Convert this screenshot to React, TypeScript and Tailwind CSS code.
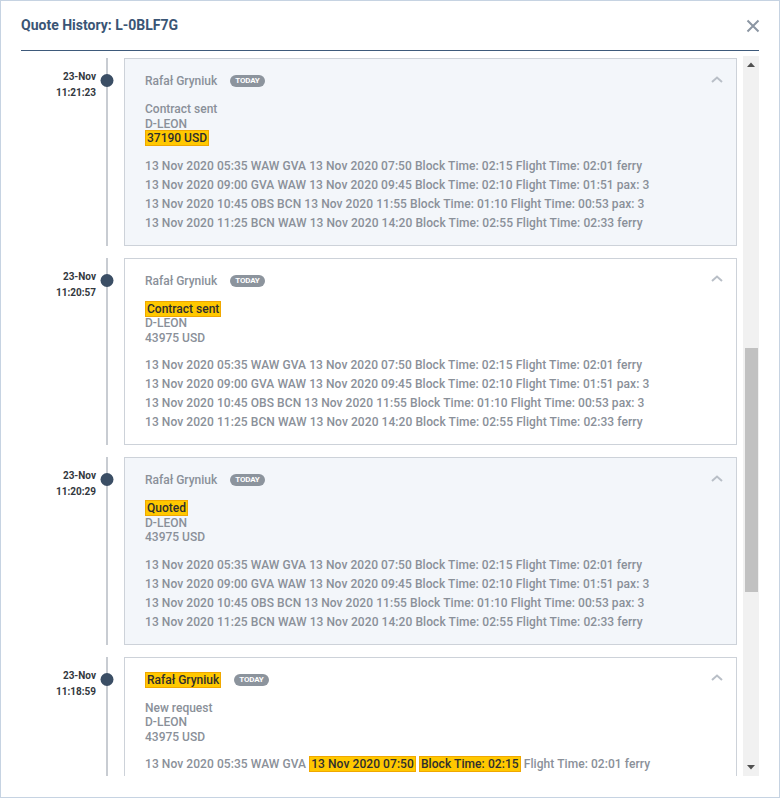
import React from "react";

type Seg = { t: string; hl?: boolean };

type Entry = {
  date: string;
  time: string;
  tinted: boolean;
  nameHl?: boolean;
  status: string;
  statusHl?: boolean;
  price: string;
  priceHl?: boolean;
  legs: Seg[][];
};

const baseLegs: Seg[][] = [
  [{ t: "13 Nov 2020 05:35 WAW GVA 13 Nov 2020 07:50 Block Time: 02:15 Flight Time: 02:01 ferry" }],
  [{ t: "13 Nov 2020 09:00 GVA WAW 13 Nov 2020 09:45 Block Time: 02:10 Flight Time: 01:51 pax: 3" }],
  [{ t: "13 Nov 2020 10:45 OBS BCN 13 Nov 2020 11:55 Block Time: 01:10 Flight Time: 00:53 pax: 3" }],
  [{ t: "13 Nov 2020 11:25 BCN WAW 13 Nov 2020 14:20 Block Time: 02:55 Flight Time: 02:33 ferry" }],
];

const entries: Entry[] = [
  { date: "23-Nov", time: "11:21:23", tinted: true, status: "Contract sent", price: "37190 USD", priceHl: true, legs: baseLegs },
  { date: "23-Nov", time: "11:20:57", tinted: false, status: "Contract sent", statusHl: true, price: "43975 USD", legs: baseLegs },
  { date: "23-Nov", time: "11:20:29", tinted: true, status: "Quoted", statusHl: true, price: "43975 USD", legs: baseLegs },
  {
    date: "23-Nov",
    time: "11:18:59",
    tinted: false,
    nameHl: true,
    status: "New request",
    price: "43975 USD",
    legs: [
      [
        { t: "13 Nov 2020 05:35 WAW GVA " },
        { t: "13 Nov 2020 07:50", hl: true },
        { t: " " },
        { t: "Block Time: 02:15", hl: true },
        { t: " Flight Time: 02:01 ferry" },
      ],
      ...baseLegs.slice(1),
    ],
  },
];

function Mark({ children }: { children: React.ReactNode }) {
  return (
    <span className="bg-[#ffc800] border border-[#f0a800] text-[#2e2e2e] px-px">{children}</span>
  );
}

function Line({ text, hl }: { text: string; hl?: boolean }) {
  return <div>{hl ? <Mark>{text}</Mark> : text}</div>;
}

function Chevron() {
  return (
    <svg width="12" height="7" viewBox="0 0 12 7" className="mt-[-4px]">
      <path d="M1 6 L6 1.5 L11 6" fill="none" stroke="#b9bfc7" strokeWidth="2" />
    </svg>
  );
}

function Card({ e }: { e: Entry }) {
  return (
    <div
      className={
        "flex-1 mr-[6px] border border-[#cdd2d9] pl-5 pr-[13px] pt-[15px] pb-[12px] " +
        (e.tinted ? "bg-[#f3f6fa]" : "bg-white")
      }
    >
      <div className="flex items-center h-[14px]">
        <span className="text-[12px] leading-[14px]">
          {e.nameHl ? <Mark>Rafał Gryniuk</Mark> : "Rafał Gryniuk"}
        </span>
        <span className="ml-[13px] h-[12px] px-[5px] rounded-full bg-[#8c949d] text-white text-[8px] leading-[12px] font-bold tracking-[-0.2px]">
          TODAY
        </span>
        <div className="flex-1" />
        <Chevron />
      </div>
      <div className="mt-[14px] text-[12px] leading-[14.5px]">
        <Line text={e.status} hl={e.statusHl} />
        <Line text="D-LEON" />
        <Line text={e.price} hl={e.priceHl} />
      </div>
      <div className="mt-[11px] text-[12px] leading-[19px] whitespace-nowrap tracking-[0.07px]">
        {e.legs.map((segs, i) => (
          <div key={i}>
            {segs.map((s, j) => (s.hl ? <Mark key={j}>{s.t}</Mark> : <span key={j}>{s.t}</span>))}
          </div>
        ))}
      </div>
    </div>
  );
}

function Row({ e, last }: { e: Entry; last: boolean }) {
  return (
    <div className={"flex " + (last ? "" : "pb-3")}>
      <div className="w-[75px] text-right pt-[11px] text-[10px] leading-[16px] font-bold text-[#333840]">
        <div>{e.date}</div>
        <div>{e.time}</div>
      </div>
      <div className="relative w-[22px] flex justify-center">
        <div className="w-[2px] bg-[#c8ccd2]" />
        <div className="absolute top-[16px] left-1/2 -translate-x-1/2 w-[13px] h-[13px] rounded-full bg-[#3b4e65]" />
      </div>
      <div className="w-[6px]" />
      <Card e={e} />
    </div>
  );
}

function ScrollBar() {
  return (
    <div className="w-[16px] flex flex-col bg-[#f1f1f1]">
      <div className="h-[17px] flex items-center justify-center">
        <svg width="8" height="5" viewBox="0 0 8 5">
          <path d="M0 5 L4 0.5 L8 5 Z" fill="#505050" />
        </svg>
      </div>
      <div className="h-[275px]" />
      <div className="h-[244px] ml-[2px] mr-[1px] bg-[#c1c1c1]" />
      <div className="flex-1" />
      <div className="h-[17px] flex items-center justify-center">
        <svg width="8" height="5" viewBox="0 0 8 5">
          <path d="M0 0 L4 4.5 L8 0 Z" fill="#505050" />
        </svg>
      </div>
    </div>
  );
}

export default function App() {
  return (
    <div className="w-[780px] h-[799px] bg-white font-['Roboto',sans-serif] font-medium text-[#8a9099]">
      <div className="h-[798px] border border-[#c6d3e2] flex flex-col">
        <div className="mx-[20px] h-[50px] border-b border-[#3e5a7b] flex items-center justify-between">
          <h1 className="text-[14px] font-bold text-[#3a5575] mt-[-1px]">Quote History: L-0BLF7G</h1>
          <svg width="14" height="14" viewBox="0 0 14 14" className="mr-[-1px]">
            <path d="M1.5 1.5 L12.5 12.5 M12.5 1.5 L1.5 12.5" stroke="#8c96a3" strokeWidth="2" />
          </svg>
        </div>
        <div className="mx-[20px] mt-[5px] h-[720px] flex shrink-0">
          <div className="flex-1 overflow-hidden pt-[2px]">
            {entries.map((e, i) => (
              <Row key={i} e={e} last={i === entries.length - 1} />
            ))}
          </div>
          <ScrollBar />
        </div>
      </div>
    </div>
  );
}
